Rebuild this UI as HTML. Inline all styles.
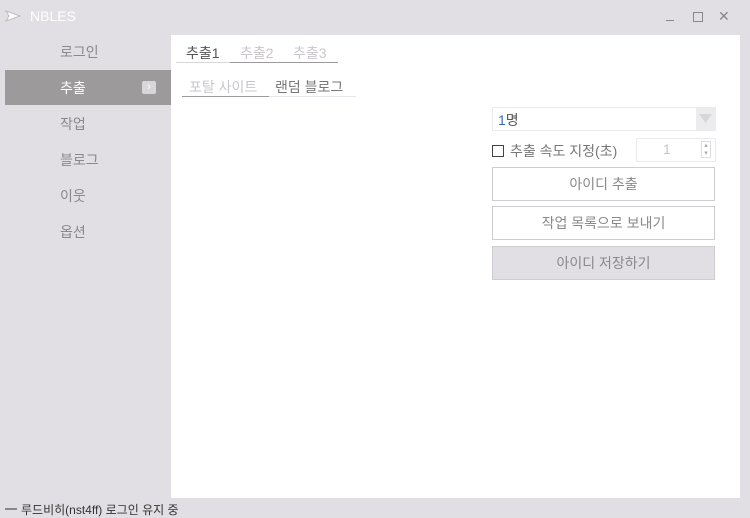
<!DOCTYPE html><html><head><meta charset="utf-8"><style>
body{margin:0;width:750px;height:518px;background:#e1dfe4;font-family:"Liberation Sans","Noto Sans CJK KR",sans-serif;position:relative;overflow:hidden}
.a{position:absolute}
.side{left:60px;font-size:14px;color:#8a888c}
.btn{position:absolute;left:492px;width:223px;border:1px solid #cfcdd1;background:#fff;color:#8a888c;font-size:14px;text-align:center;box-sizing:border-box}
</style></head><body>
<svg class="a" style="left:5px;top:10px" width="16" height="12"><path d="M1 1 L15 6 L1 11 L4 6 Z" fill="#fff" stroke="#bbb" stroke-width="1"/></svg>
<div class="a" style="left:30px;top:8px;color:#fff;font-size:14px">NBLES</div>
<div class="a" style="left:666px;top:20px;width:8px;height:1px;background:#888"></div>
<div class="a" style="left:693px;top:12px;width:8px;height:8px;border:1px solid #888"></div>
<div class="a" style="left:718px;top:8px;color:#888;font-size:14px">✕</div>
<div class="a side" style="top:42px">로그인</div>
<div class="a" style="left:5px;top:70px;width:166px;height:35px;background:#9d9a9b"></div>
<div class="a side" style="top:78px;color:#fff">추출</div>
<div class="a" style="left:142px;top:81px;width:14px;height:13px;background:#d8d6d9;border-radius:2px;color:#fff;font-size:11px;text-align:center;line-height:13px">›</div>
<div class="a side" style="top:114px">작업</div>
<div class="a side" style="top:150px">블로그</div>
<div class="a side" style="top:186px">이웃</div>
<div class="a side" style="top:222px">옵션</div>
<div class="a" style="left:171px;top:35px;width:569px;height:463px;background:#fff"></div>
<div class="a" style="left:186px;top:43px;font-size:14px;color:#555">추출1</div>
<div class="a" style="left:240px;top:43px;font-size:14px;color:#c8c6ca">추출2</div>
<div class="a" style="left:293px;top:43px;font-size:14px;color:#c8c6ca">추출3</div>
<div class="a" style="left:176px;top:62px;width:54px;height:1px;background:#d8d6d9"></div>
<div class="a" style="left:230px;top:62px;width:108px;height:1px;background:#9d9a9b"></div>
<div class="a" style="left:189px;top:77px;font-size:14px;color:#c8c6ca">포탈 사이트</div>
<div class="a" style="left:275px;top:77px;font-size:14px;color:#777">랜덤 블로그</div>
<div class="a" style="left:182px;top:96px;width:87px;height:1px;background:#9d9a9b"></div>
<div class="a" style="left:269px;top:96px;width:87px;height:1px;background:#e8e6ea"></div>
<div class="a" style="left:492px;top:107px;width:224px;height:24px;border:1px solid #eceaee;box-sizing:border-box"></div>
<div class="a" style="left:498px;top:110px;font-size:14px;color:#555"><span style="color:#3a6fb8">1</span>명</div>
<div class="a" style="left:696px;top:108px;width:19px;height:22px;background:#ececee"></div>
<svg class="a" style="left:699px;top:114px" width="13" height="10"><path d="M0 0 H13 L6.5 9Z" fill="#d8d6d9"/></svg>
<div class="a" style="left:492px;top:145px;width:10px;height:10px;border:1px solid #444"></div>
<div class="a" style="left:510px;top:141px;font-size:14px;color:#777">추출 속도 지정(초)</div>
<div class="a" style="left:636px;top:138px;width:80px;height:24px;border:1px solid #eceaee;box-sizing:border-box"></div>
<div class="a" style="left:663px;top:141px;font-size:14px;color:#c8c6ca">1</div>
<div class="a" style="left:701px;top:141px;width:10px;height:17px;border:1px solid #ddd;font-size:7px;color:#aaa;text-align:center;line-height:8px;box-sizing:border-box">▴<br>▾</div>
<div class="btn" style="top:167px;height:34px;line-height:32px">아이디 추출</div>
<div class="btn" style="top:206px;height:34px;line-height:32px">작업 목록으로 보내기</div>
<div class="btn" style="top:246px;height:34px;line-height:32px;background:#e1dfe4">아이디 저장하기</div>
<div class="a" style="left:5px;top:508px;width:12px;height:2px;background:#888"></div>
<div class="a" style="left:21px;top:501px;font-size:12px;color:#333">루드비히(nst4ff) 로그인 유지 중</div>
</body></html>
